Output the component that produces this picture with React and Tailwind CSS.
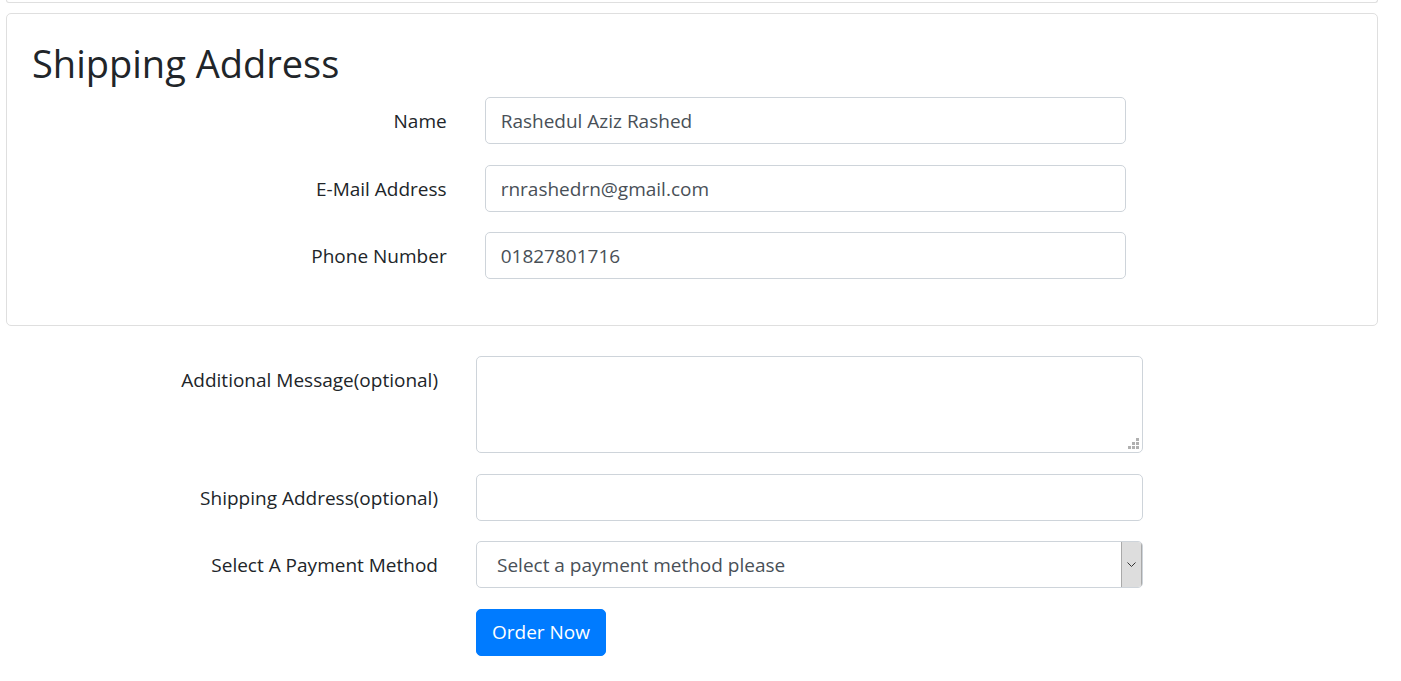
import React from "react";

const font = { fontFamily: '"Open Sans", "Noto Sans", sans-serif' };

function Row({ label, children, top = "pt-[9px]" }) {
  return (
    <div className="flex mb-[20.5px]">
      <div className="w-1/3 px-[19px] flex justify-end">
        <label className={`text-[19px] leading-[30px] text-[#212529] ${top}`}>{label}</label>
      </div>
      <div className="w-1/2 px-[19px]">{children}</div>
    </div>
  );
}

const inputCls =
  "block w-full h-[47px] px-[15px] pt-[1px] border border-[#ced4da] rounded-[5px] text-[19px] text-[#495057] bg-white outline-none";

export default function App() {
  return (
    <div className="w-[1401px] h-[681px] bg-white overflow-hidden" style={font}>
      <div className="mx-[6px] w-[1372px]">
        <div className="h-[3px] border border-t-0 border-[#dfdfdf] rounded-b-[5px]" />
        <div className="mt-[10px] border border-[#dfdfdf] rounded-[5px] px-[25px] pt-[25px] pb-[25.5px]">
          <h1 className="text-[38px] leading-[48px] mb-[10px] text-[#212529] font-normal">Shipping Address</h1>
          <div className="-mx-[19px]">
            <Row label="Name">
              <input className={inputCls} defaultValue="Rashedul Aziz Rashed" />
            </Row>
            <Row label="E-Mail Address">
              <input className={inputCls} defaultValue="rnrashedrn@gmail.com" />
            </Row>
            <Row label="Phone Number">
              <input className={inputCls} defaultValue="01827801716" />
            </Row>
          </div>
        </div>
        <div className="mt-[30px] -mx-[19px]">
          <Row label="Additional Message(optional)">
            <div className="relative">
              <textarea className="block w-full h-[97px] px-[15px] py-[8px] border border-[#ced4da] rounded-[5px] text-[19px] text-[#495057] resize-none outline-none" />
              <div className="absolute right-[4px] bottom-[4px] grid grid-cols-3 gap-[1px]">
                <span className="w-[3px] h-[3px]" />
                <span className="w-[3px] h-[3px]" />
                <span className="w-[3px] h-[3px] bg-[#b0b0b0]" />
                <span className="w-[3px] h-[3px]" />
                <span className="w-[3px] h-[3px] bg-[#b0b0b0]" />
                <span className="w-[3px] h-[3px] bg-[#b0b0b0]" />
                <span className="w-[3px] h-[3px] bg-[#b0b0b0]" />
                <span className="w-[3px] h-[3px] bg-[#b0b0b0]" />
                <span className="w-[3px] h-[3px] bg-[#b0b0b0]" />
              </div>
            </div>
          </Row>
          <Row label="Shipping Address(optional)">
            <input className={inputCls} />
          </Row>
          <Row label="Select A Payment Method">
            <div className="flex h-[47px] border border-[#ced4da] rounded-[5px] bg-white overflow-hidden">
              <div className="flex-1 flex items-center pl-[20px] pt-[1px] text-[19px] text-[#495057]">
                Select a payment method please
              </div>
              <div className="w-[21px] flex items-center justify-center bg-[#dddddd] border-l border-r border-[#a9a9a9]">
                <svg width="9" height="6" viewBox="0 0 9 6">
                  <path d="M0.5 0.5 L4.5 4.5 L8.5 0.5" fill="none" stroke="#333" strokeWidth="1" />
                </svg>
              </div>
            </div>
          </Row>
          <div className="flex">
            <div className="w-1/3" />
            <div className="w-1/2 px-[19px]">
              <button className="h-[47px] px-[15px] pt-[1px] bg-[#007bff] text-white text-[19px] rounded-[5px] border border-[#007bff]">
                Order Now
              </button>
            </div>
          </div>
        </div>
      </div>
    </div>
  );
}
